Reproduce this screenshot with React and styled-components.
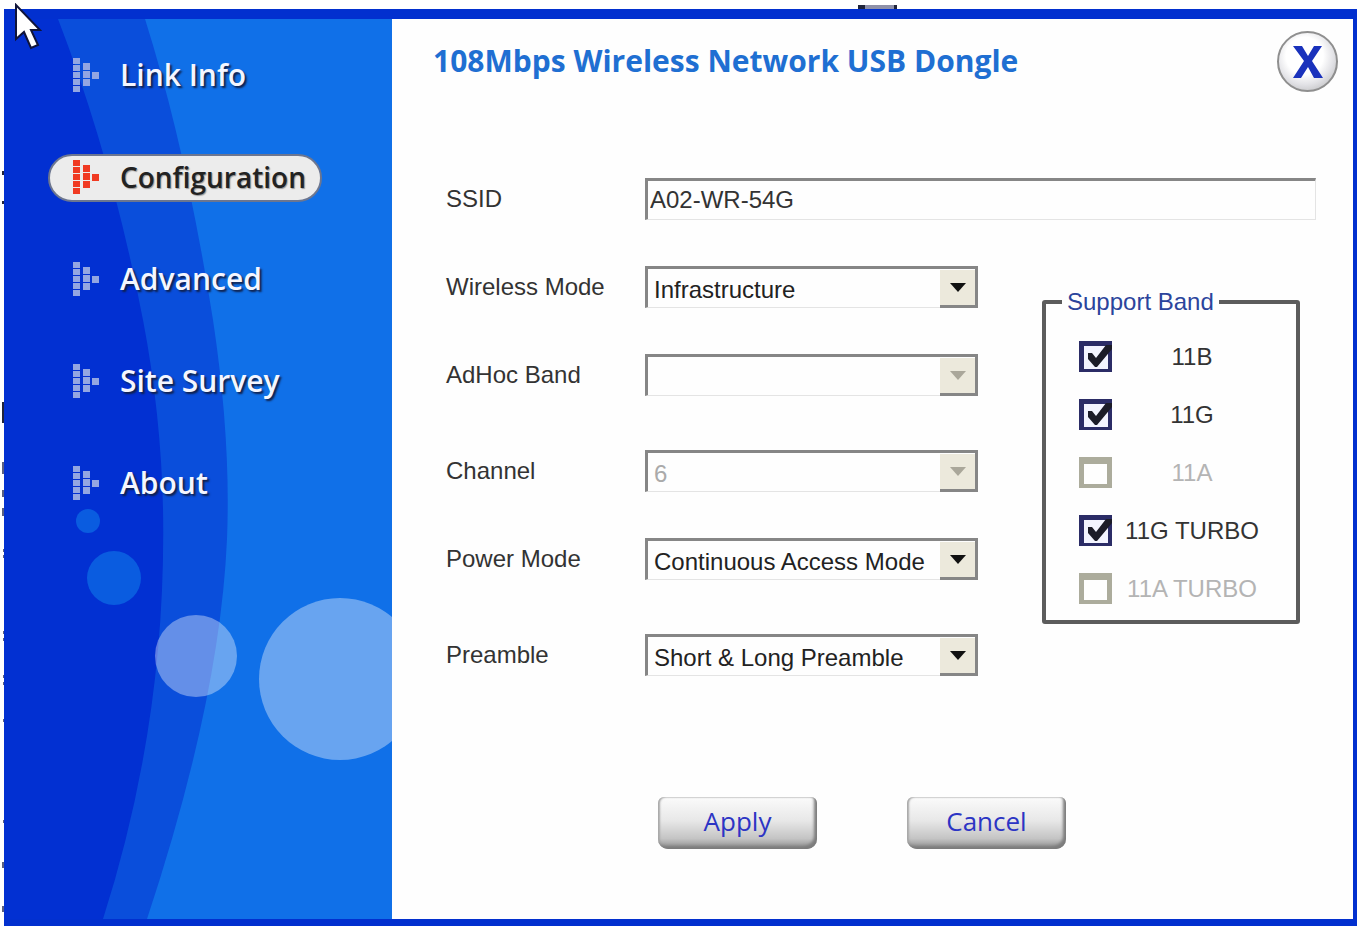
import { useState } from "react"
import styled, { createGlobalStyle } from "styled-components"

const GlobalStyle = createGlobalStyle`
    * {
        box-sizing: border-box;
    }

    body {
        margin: 0;
        background: white;
        font-family: "Liberation Sans", Arial, sans-serif;
        font-size: 24px;
        line-height: 28px;
        color: #333333;
    }
`

const Desktop = styled.div`
    position: relative;
    display: flex;
    min-height: 100vh;
    padding: 9px 0 0 4px;
`

const Leftovers = styled.svg`
    position: absolute;
    top: 0;
    left: 0;
    pointer-events: none;
`

const Cursor = styled.svg`
    position: absolute;
    top: 3px;
    left: 14px;
    pointer-events: none;
`

const Window = styled.div`
    flex: 1;
    display: flex;
    background: #fefefe;
    border: solid #0230cf;
    border-width: 10px 4px 7px 0;
`

const Sidebar = styled.aside`
    position: relative;
    flex: 0 0 388px;
    overflow: hidden;
    background: #0230d2;
`

const Waves = styled.svg`
    position: absolute;
    top: 0;
    left: 0;
    width: 100%;
    height: 100%;
`

const Nav = styled.nav`
    position: relative;
    display: flex;
    flex-direction: column;
    align-items: flex-start;
    gap: 54px;
    padding: 33px 0 0 44px;
`

const NavItem = styled.a`
    display: flex;
    align-items: center;
    gap: 20px;
    height: 48px;
    padding: 0 14px 2px 22px;
    border: 2px solid transparent;
    border-radius: 24px;
    font-family: "Open Sans", Tahoma, sans-serif;
    font-size: 30px;
    font-weight: 600;
    text-decoration: none;
    color: #f4f6ff;
    text-shadow: 2px 2px 2px #10204a;

    ${ props => props.$active && `
        font-size: 28px;
        color: #222222;
        background: #ececec;
        border-color: #6c7690;
        text-shadow: 1px 1px 1px #999999;
    ` }
`

const Main = styled.main`
    flex: 1;
    min-width: 0;
`

const Header = styled.header`
    display: flex;
    justify-content: space-between;
    padding: 12px 15px 0 41px;
`

const Title = styled.h1`
    margin: 10px 0 0;
    font-family: "Open Sans", Tahoma, sans-serif;
    font-size: 30px;
    font-weight: 700;
    line-height: 40px;
    color: #1f6fd2;
`

const CloseButton = styled.button`
    display: flex;
    align-items: center;
    justify-content: center;
    width: 61px;
    height: 61px;
    padding: 0;
    border: 2px solid #8f8f8f;
    border-radius: 50%;
    background: radial-gradient(circle at 45% 40%, #ffffff 40%, #e2e2e6 62%, #a8a8a8 100%);
`

const Form = styled.form`
    padding: 86px 37px 0 54px;
`

const Row = styled.div`
    display: grid;
    grid-template-columns: 199px 1fr;
    align-items: center;
    margin-bottom: ${ props => props.$loose ? 54 : 46 }px;
`

const TextBox = styled.input`
    width: 100%;
    height: 42px;
    padding: 0 2px;
    border: solid;
    border-width: 3px 1px 1px 3px;
    border-color: #868686 #e4e4e4 #e4e4e4 #868686;
    border-radius: 0;
    background: #fefefe;
    font: inherit;
    color: inherit;
    outline: none;
`

const Columns = styled.div`
    display: flex;
    align-items: flex-start;
    gap: 64px;
`

const Fields = styled.div`
    flex: 1;
`

const SelectBox = styled.div`
    display: grid;
    grid-template-columns: 1fr 38px;
    height: 42px;
`

const Select = styled.select`
    grid-area: 1 / 1 / 2 / 3;
    appearance: none;
    padding: 4px 38px 0 6px;
    border: solid;
    border-width: 3px 3px 1px 3px;
    border-color: #868686 #868686 #e4e4e4 #868686;
    border-radius: 0;
    background: #fefefe;
    font: inherit;
    color: #222222;
    outline: none;

    &:disabled {
        color: #aaaaaa;
        opacity: 1;
    }
`

const Arrow = styled.span`
    grid-area: 1 / 2;
    display: flex;
    align-items: center;
    justify-content: center;
    margin-top: 4px;
    background: #ece9dc;
    border: solid #868686;
    border-width: 0 3px 3px 0;
    color: ${ props => props.$disabled ? "#aaa79a" : "#111111" };
    pointer-events: none;
`

const Bands = styled.fieldset`
    flex: 0 0 258px;
    margin: 22px 16px 0 0;
    padding: 25px 24px 16px 33px;
    border: 4px solid #5c5c5c;
    border-radius: 3px;
`

const Legend = styled.legend`
    margin-left: -17px;
    padding: 0 5px;
    color: #2b449c;
`

const BandList = styled.div`
    display: flex;
    flex-direction: column;
    gap: 27px;
`

const Band = styled.label`
    display: flex;
    align-items: center;
    height: 31px;
    color: ${ props => props.$disabled ? "#b4b4b4" : "#333333" };
`

const BandName = styled.span`
    flex: 1;
    text-align: center;
    white-space: nowrap;
`

const Tick = styled.span`
    display: grid;
    flex: 0 0 33px;
    height: 31px;
`

const TickInput = styled.input`
    grid-area: 1 / 1;
    appearance: none;
    margin: 0;
    border: solid #2b2c66;
    border-width: 5px 4px 3px 5px;
    background: #f3f4ff;

    &:disabled {
        border-color: #acac9c;
        border-width: 7px 5px 4px 5px;
        background: #fefefe;
    }
`

const TickMark = styled.svg`
    grid-area: 1 / 1;
    pointer-events: none;
`

const Actions = styled.div`
    display: flex;
    gap: 90px;
    padding: 67px 0 0 212px;
`

const Button = styled.button`
    width: 159px;
    height: 52px;
    padding: 0 0 4px;
    border: 0;
    border-radius: 6px 6px 10px 10px;
    background: linear-gradient(#fbfbfb, #e8e8e8 45%, #c4c4c4 80%, #8a8a8a);
    box-shadow:
        inset -3px -3px 3px #7c7c7c,
        inset 2px 0 2px #a8a8a8,
        inset 0 1px 1px #e0e0e0;
    font-family: "Open Sans", Tahoma, sans-serif;
    font-size: 26px;
    line-height: 36px;
    color: #2c34c4;
`

const pages = ["Link Info", "Configuration", "Advanced", "Site Survey", "About"]

const selects = [
    { label: "Wireless Mode", options: ["Infrastructure", "Ad-Hoc"] },
    { label: "AdHoc Band", options: [""], disabled: true, loose: true },
    { label: "Channel", options: ["6"], disabled: true },
    { label: "Power Mode", options: ["Continuous Access Mode", "Power Save Mode"], loose: true },
    { label: "Preamble", options: ["Short & Long Preamble", "Long Preamble"], loose: true },
]

const bands = [
    { name: "11B", on: true },
    { name: "11G", on: true },
    { name: "11A", disabled: true },
    { name: "11G TURBO", on: true },
    { name: "11A TURBO", disabled: true },
]

const DotsIcon = ({ active }) => (
    <svg width="28" height="34" viewBox="0 0 28 34" fill={active ? "#f03a22" : "#93a6e2"} aria-hidden="true">
        {[0, 7, 14, 21, 28].map(y => <rect key={y} x="1" y={y} width="7" height="6" />)}
        {[5, 13, 21].map(y => <rect key={y} x="11" y={y} width="7" height="7" />)}
        <rect x="20" y="14" width="7" height="7" />
    </svg>
)

const SelectField = ({ label, options, disabled, loose }) => {
    const id = label.toLowerCase().replace(" ", "-")

    return (
        <Row $loose={loose}>
            <label htmlFor={id}>{label}</label>
            <SelectBox>
                <Select id={id} disabled={disabled}>
                    {options.map(option => <option key={option}>{option}</option>)}
                </Select>
                <Arrow $disabled={disabled}>
                    <svg width="16" height="9" viewBox="0 0 16 9" aria-hidden="true">
                        <path d="M0 0H16L8 9Z" fill="currentColor" />
                    </svg>
                </Arrow>
            </SelectBox>
        </Row>
    )
}

const BandField = ({ name, on, disabled }) => {
    const [checked, setChecked] = useState(Boolean(on))

    return (
        <Band $disabled={disabled}>
            <Tick>
                <TickInput
                    type="checkbox"
                    checked={checked}
                    disabled={disabled}
                    onChange={event => setChecked(event.target.checked)}
                />
                {checked && (
                    <TickMark width="33" height="31" viewBox="0 0 33 31">
                        <path d="M9 12L13 12L17 17L27 4H33V8L18 26H16L9 18Z" fill="#1c1c28" />
                    </TickMark>
                )}
            </Tick>
            <BandName>{name}</BandName>
        </Band>
    )
}

const App = () => {
    const [page, setPage] = useState("Configuration")

    return (
        <Desktop>
            <GlobalStyle />
            <Leftovers width="900" height="926" viewBox="0 0 900 926" fill="#20243a" aria-hidden="true">
                <path d="M858 5H865V9H858ZM894 5H897V9H894Z" />
                <path d="M865 5H894V9H865Z" fill="#8e90a8" />
                <path d="M2 171H4V175H2ZM2 201H4V204H2ZM2 402H4V423H2Z" />
                <path
                    d="M2 462H4V474H2ZM2 490H4V497H2ZM2 508H4V516H2ZM3 549H4V552H3ZM3 555H4V558H3ZM3 631H4V634H3ZM3 638H4V641H3ZM3 675H4V678H3ZM3 682H4V685H3ZM3 719H4V722H3ZM3 820H4V823H3ZM2 862H4V868H2ZM2 906H4V912H2Z"
                    fill="#5a6080"
                />
            </Leftovers>
            <Window>
                <Sidebar>
                    <Waves viewBox="0 0 388 900" preserveAspectRatio="xMinYMin slice" aria-hidden="true">
                        <path d="M54 0Q108 140 139 301Q157 395 159 490Q163 700 99 900H388V0Z" fill="#0a4edb" />
                        <path d="M141 0Q182 130 209 301Q227 420 223 520Q216 680 143 900H388V0Z" fill="#1070e8" />
                        <circle cx="84" cy="502" r="12" fill="#0a5ce0" />
                        <circle cx="110" cy="559" r="27" fill="#0a5ce0" />
                        <circle cx="192" cy="637" r="41" fill="white" opacity="0.37" />
                        <circle cx="336" cy="660" r="81" fill="white" opacity="0.37" />
                    </Waves>
                    <Nav>
                        {pages.map(name => (
                            <NavItem key={name} href="#" $active={name === page} onClick={() => setPage(name)}>
                                <DotsIcon active={name === page} />
                                {name}
                            </NavItem>
                        ))}
                    </Nav>
                </Sidebar>
                <Main>
                    <Header>
                        <Title>108Mbps Wireless Network USB Dongle</Title>
                        <CloseButton type="button" aria-label="Close">
                            <svg width="30" height="32" viewBox="0 0 30 32" aria-hidden="true">
                                <path d="M0 0H9L15 10L21 0H29L19 15L30 32H21L15 21L8 32H0L11 15Z" fill="#1a32bc" />
                            </svg>
                        </CloseButton>
                    </Header>
                    <Form onSubmit={event => event.preventDefault()}>
                        <Row>
                            <label htmlFor="ssid">SSID</label>
                            <TextBox id="ssid" type="text" defaultValue="A02-WR-54G" />
                        </Row>
                        <Columns>
                            <Fields>
                                {selects.map(field => <SelectField key={field.label} {...field} />)}
                            </Fields>
                            <Bands>
                                <Legend>Support Band</Legend>
                                <BandList>
                                    {bands.map(band => <BandField key={band.name} {...band} />)}
                                </BandList>
                            </Bands>
                        </Columns>
                        <Actions>
                            <Button type="submit">Apply</Button>
                            <Button type="button">Cancel</Button>
                        </Actions>
                    </Form>
                </Main>
            </Window>
            <Cursor width="28" height="48" viewBox="0 0 28 48" aria-hidden="true">
                <path d="M2 2V36L10 29L17 45L24 42L17 27H26Z" fill="white" stroke="#10143a" strokeWidth="2" />
            </Cursor>
        </Desktop>
    )
}

export default App
